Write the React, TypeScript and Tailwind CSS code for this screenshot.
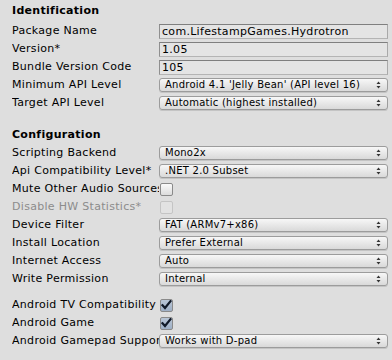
import type { ReactNode } from "react"

const font = { fontFamily: '"DejaVu Sans", Verdana, sans-serif' }

const Row = ({ label, disabled, children }: { label: string; disabled?: boolean; children: ReactNode }) => (
  <div className="flex h-[18px] items-center">
    <div className={"w-[147px] shrink-0 overflow-hidden whitespace-nowrap " + (disabled ? "text-[#8c8c8c]" : "text-black")}>
      {label}
    </div>
    <div className="flex flex-1 items-center pr-[4px]">{children}</div>
  </div>
)

const TextField = ({ value }: { value: string }) => (
  <div className="flex h-[15px] w-full items-center overflow-hidden whitespace-nowrap border border-t-[#7f7f7f] border-l-[#8f8f8f] border-r-[#a9a9a9] border-b-[#b4b4b4] bg-[#e4e4e4] pl-[2px] leading-none text-black">
    {value}
  </div>
)

const Popup = ({ value }: { value: string }) => (
  <div className="flex h-[14px] w-full items-center justify-between overflow-hidden whitespace-nowrap rounded-[3px] border border-[#9c9c9c] bg-gradient-to-b from-[#f7f7f7] to-[#d9d9d9] pl-[5px] pr-[6px] text-[10px] leading-none tracking-[0.25px] text-black shadow-[0_1px_0_#c4c4c4]">
    <span>{value}</span>
    <svg width="5" height="8" viewBox="0 0 5 8">
      <path d="M2.5 0.5 L4.5 3 L0.5 3 Z" fill="#333" />
      <path d="M2.5 7.5 L4.5 5 L0.5 5 Z" fill="#333" />
    </svg>
  </div>
)

const Check = ({ checked, disabled }: { checked?: boolean; disabled?: boolean }) => (
  <div
    className={
      "ml-[1px] flex h-[13px] w-[13px] items-center justify-center rounded-[2px] border " +
      (disabled
        ? "border-[#c4c4c4] bg-[#e2e2e2]"
        : checked
          ? "border-[#8a8a8a] bg-gradient-to-b from-[#b9c6d6] to-[#9fb0c6]"
          : "border-[#8a8a8a] bg-gradient-to-b from-[#fafafa] to-[#dcdcdc]")
    }
  >
    {checked && (
      <svg width="11" height="10" viewBox="0 0 11 10">
        <path d="M1.5 5.2 L4 8 L9.5 1.2" stroke="#111a28" strokeWidth="2.2" fill="none" strokeLinecap="square" />
      </svg>
    )}
  </div>
)

const Heading = ({ title }: { title: string }) => (
  <div className="flex h-[18px] items-center font-bold text-black">{title}</div>
)

export default function App() {
  return (
    <div className="h-[360px] w-[392px] overflow-hidden bg-[#dedede] pl-[12px] pt-[2px] text-[11px] tracking-[0.3px]" style={font}>
      <Heading title="Identification" />
      <div className="mt-[2px]">
        <Row label="Package Name"><TextField value="com.LifestampGames.Hydrotron" /></Row>
        <Row label="Version*"><TextField value="1.05" /></Row>
        <Row label="Bundle Version Code"><TextField value="105" /></Row>
        <Row label="Minimum API Level"><Popup value="Android 4.1 'Jelly Bean' (API level 16)" /></Row>
        <Row label="Target API Level"><Popup value="Automatic (highest installed)" /></Row>
      </div>

      <div className="mt-[14px]">
        <Heading title="Configuration" />
        <Row label="Scripting Backend"><Popup value="Mono2x" /></Row>
        <Row label="Api Compatibility Level*"><Popup value=".NET 2.0 Subset" /></Row>
        <Row label="Mute Other Audio Sources"><Check /></Row>
        <Row label="Disable HW Statistics*" disabled><Check disabled /></Row>
        <Row label="Device Filter"><Popup value="FAT (ARMv7+x86)" /></Row>
        <Row label="Install Location"><Popup value="Prefer External" /></Row>
        <Row label="Internet Access"><Popup value="Auto" /></Row>
        <Row label="Write Permission"><Popup value="Internal" /></Row>
      </div>

      <div className="mt-[8px]">
        <Row label="Android TV Compatibility"><Check checked /></Row>
        <Row label="Android Game"><Check checked /></Row>
        <Row label="Android Gamepad Support Level"><Popup value="Works with D-pad" /></Row>
      </div>
    </div>
  )
}
